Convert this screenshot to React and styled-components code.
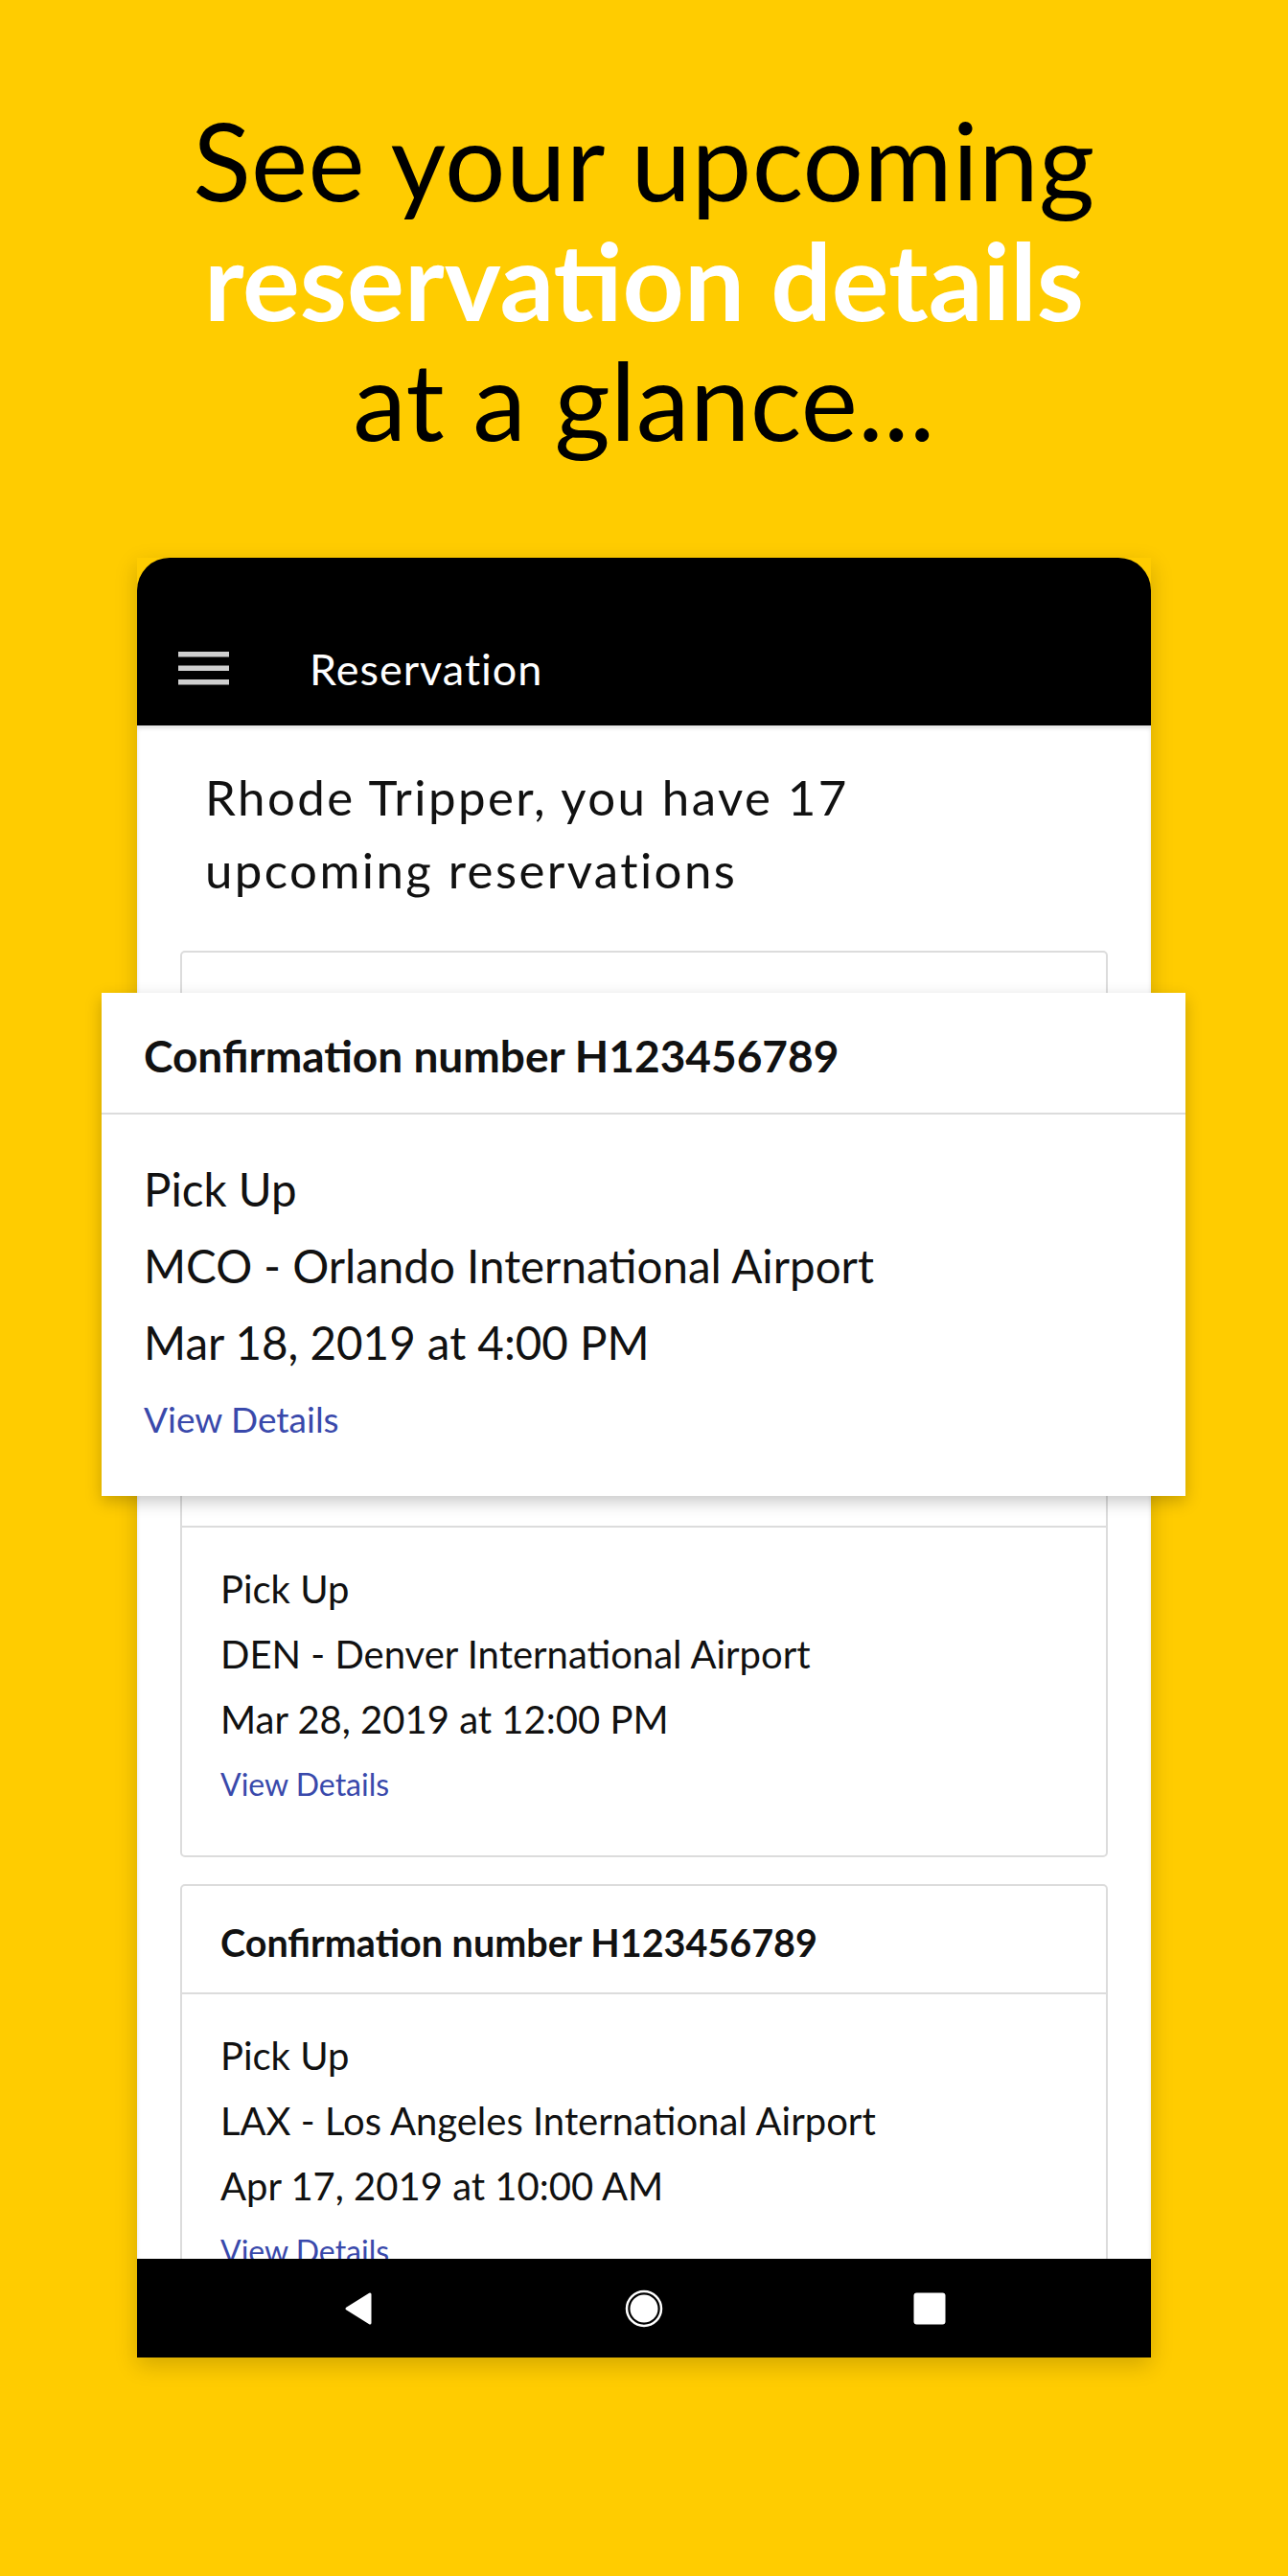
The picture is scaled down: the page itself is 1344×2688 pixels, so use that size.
import React from 'react';
import styled, { createGlobalStyle } from 'styled-components';

const GlobalStyle = createGlobalStyle`
  body {
    margin: 0;
    background: #ffcc00;
    font-family: Lato, "Noto Sans", sans-serif;
  }
`;

const Page = styled.div`
  width: 1344px;
  min-height: 2688px;
  box-sizing: border-box;
  padding-top: 104px;
  background: #ffcc00;
  font-family: Lato, "Noto Sans", sans-serif;
`;

const Headline = styled.h1`
  margin: 0;
  text-align: center;
  font-size: 112px;
  line-height: 125px;
  font-weight: 400;
  color: #000;
`;

const HeadLine = styled.span`
  display: block;
  color: ${(p) => (p.$light ? '#fff' : '#000')};
  font-weight: ${(p) => (p.$light ? 700 : 400)};
  letter-spacing: ${(p) => (p.$light ? '0' : '0.4px')};
`;

const Phone = styled.div`
  position: relative;
  width: 1058px;
  margin: 103px auto 0;
  box-shadow: 0 8px 22px rgba(0, 0, 0, 0.18);
`;

const AppBar = styled.div`
  height: 175px;
  background: #000;
  border-radius: 34px 34px 0 0;
  display: flex;
  align-items: flex-end;
`;

const Toolbar = styled.div`
  height: 119px;
  display: flex;
  align-items: center;
  padding-left: 43px;
`;

const AppTitle = styled.span`
  margin-left: 84px;
  color: #fff;
  font-size: 45px;
  letter-spacing: 1px;
  font-weight: 400;
`;

const Screen = styled.div`
  height: 1600px;
  overflow: hidden;
  background: #fff;
  box-sizing: border-box;
  padding: 37px 45px 0;
  box-shadow: inset 0 3px 4px rgba(0, 0, 0, 0.12);
`;

const Greeting = styled.p`
  margin: 0 0 46px 26px;
  font-size: 51px;
  line-height: 76px;
  letter-spacing: 2.4px;
  color: #111;
`;

const CardList = styled.div`
  display: flex;
  flex-direction: column;
  gap: 28px;
`;

const Card = styled.div`
  background: #fff;
  border: ${(p) => (p.$float ? 'none' : '2px solid #dcdcdc')};
  border-radius: ${(p) => (p.$float ? '0' : '5px')};
  ${(p) =>
    p.$float &&
    `
    position: absolute;
    left: -37px;
    top: 454px;
    width: 1131px;
    box-shadow: 0 6px 16px rgba(0, 0, 0, 0.22);
  `}
`;

const CardHeader = styled.div`
  height: ${(p) => (p.$float ? '127px' : '113px')};
  box-sizing: border-box;
  display: flex;
  align-items: center;
  padding: 6px ${(p) => (p.$float ? '44px' : '40px')} 0;
  border-bottom: 2px solid #dcdcdc;
  font-size: ${(p) => (p.$float ? '46px' : '39.5px')};
  font-weight: 700;
  color: #111;
`;

const CardBody = styled.div`
  padding: ${(p) => (p.$float ? '38px 44px 40px' : '30px 40px 40px')};
`;

const Line = styled.div`
  font-size: ${(p) => (p.$float ? '47.5px' : '40px')};
  line-height: ${(p) => (p.$float ? '80px' : '68px')};
  color: #111;
  white-space: nowrap;
`;

const DetailsLink = styled.a`
  display: block;
  font-size: ${(p) => (p.$float ? '37px' : '32px')};
  line-height: ${(p) => (p.$float ? '80px' : '68px')};
  color: #3949ab;
  text-decoration: none;
`;

const NavBar = styled.div`
  height: 103px;
  background: #000;
  display: flex;
  justify-content: center;
  align-items: center;
  gap: 238px;
`;

const NavSlot = styled.div`
  width: 60px;
  display: flex;
  justify-content: center;
  align-items: center;
`;

const MenuIcon = () => (
  <svg width="53" height="35" viewBox="0 0 53 35">
    <rect x="0" y="0" width="53" height="5.5" fill="#cfcfcf" />
    <rect x="0" y="14.5" width="53" height="5.5" fill="#cfcfcf" />
    <rect x="0" y="29" width="53" height="5.5" fill="#cfcfcf" />
  </svg>
);

const reservations = [
  {
    code: 'H123456789',
    place: 'MCO - Orlando International Airport',
    date: 'Mar 18, 2019 at 4:00 PM',
  },
  {
    code: 'H123456789',
    place: 'DEN - Denver International Airport',
    date: 'Mar 28, 2019 at 12:00 PM',
  },
  {
    code: 'H123456789',
    place: 'LAX - Los Angeles International Airport',
    date: 'Apr 17, 2019 at 10:00 AM',
  },
];

function ReservationCard({ item, float }) {
  return (
    <Card $float={float}>
      <CardHeader $float={float}>Confirmation number {item.code}</CardHeader>
      <CardBody $float={float}>
        <Line $float={float}>Pick Up</Line>
        <Line $float={float}>{item.place}</Line>
        <Line $float={float}>{item.date}</Line>
        <DetailsLink $float={float} href="#">
          View Details
        </DetailsLink>
      </CardBody>
    </Card>
  );
}

export default function App() {
  return (
    <Page>
      <GlobalStyle />
      <Headline>
        <HeadLine>See your upcoming</HeadLine>
        <HeadLine $light>reservation details</HeadLine>
        <HeadLine>at a glance...</HeadLine>
      </Headline>

      <Phone>
        <AppBar>
          <Toolbar>
            <MenuIcon />
            <AppTitle>Reservation</AppTitle>
          </Toolbar>
        </AppBar>

        <Screen>
          <Greeting>
            Rhode Tripper, you have 17
            <br />
            upcoming reservations
          </Greeting>
          <CardList>
            {reservations.map((r) => (
              <ReservationCard key={r.place} item={r} />
            ))}
          </CardList>
        </Screen>

        <NavBar>
          <NavSlot>
            <svg width="32" height="36" viewBox="0 0 32 36">
              <path
                d="M28 3 L28 33 L4 18 Z"
                fill="#fff"
                stroke="#fff"
                strokeWidth="3"
                strokeLinejoin="round"
              />
            </svg>
          </NavSlot>
          <NavSlot>
            <svg width="40" height="40" viewBox="0 0 40 40">
              <circle cx="20" cy="20" r="18" fill="none" stroke="#fff" strokeWidth="2.5" />
              <circle cx="20" cy="20" r="14.5" fill="#fff" />
            </svg>
          </NavSlot>
          <NavSlot>
            <svg width="34" height="34" viewBox="0 0 34 34">
              <rect x="0.5" y="0.5" width="33" height="33" rx="3" fill="#fff" />
            </svg>
          </NavSlot>
        </NavBar>

        <ReservationCard item={reservations[0]} float />
      </Phone>
    </Page>
  );
}
